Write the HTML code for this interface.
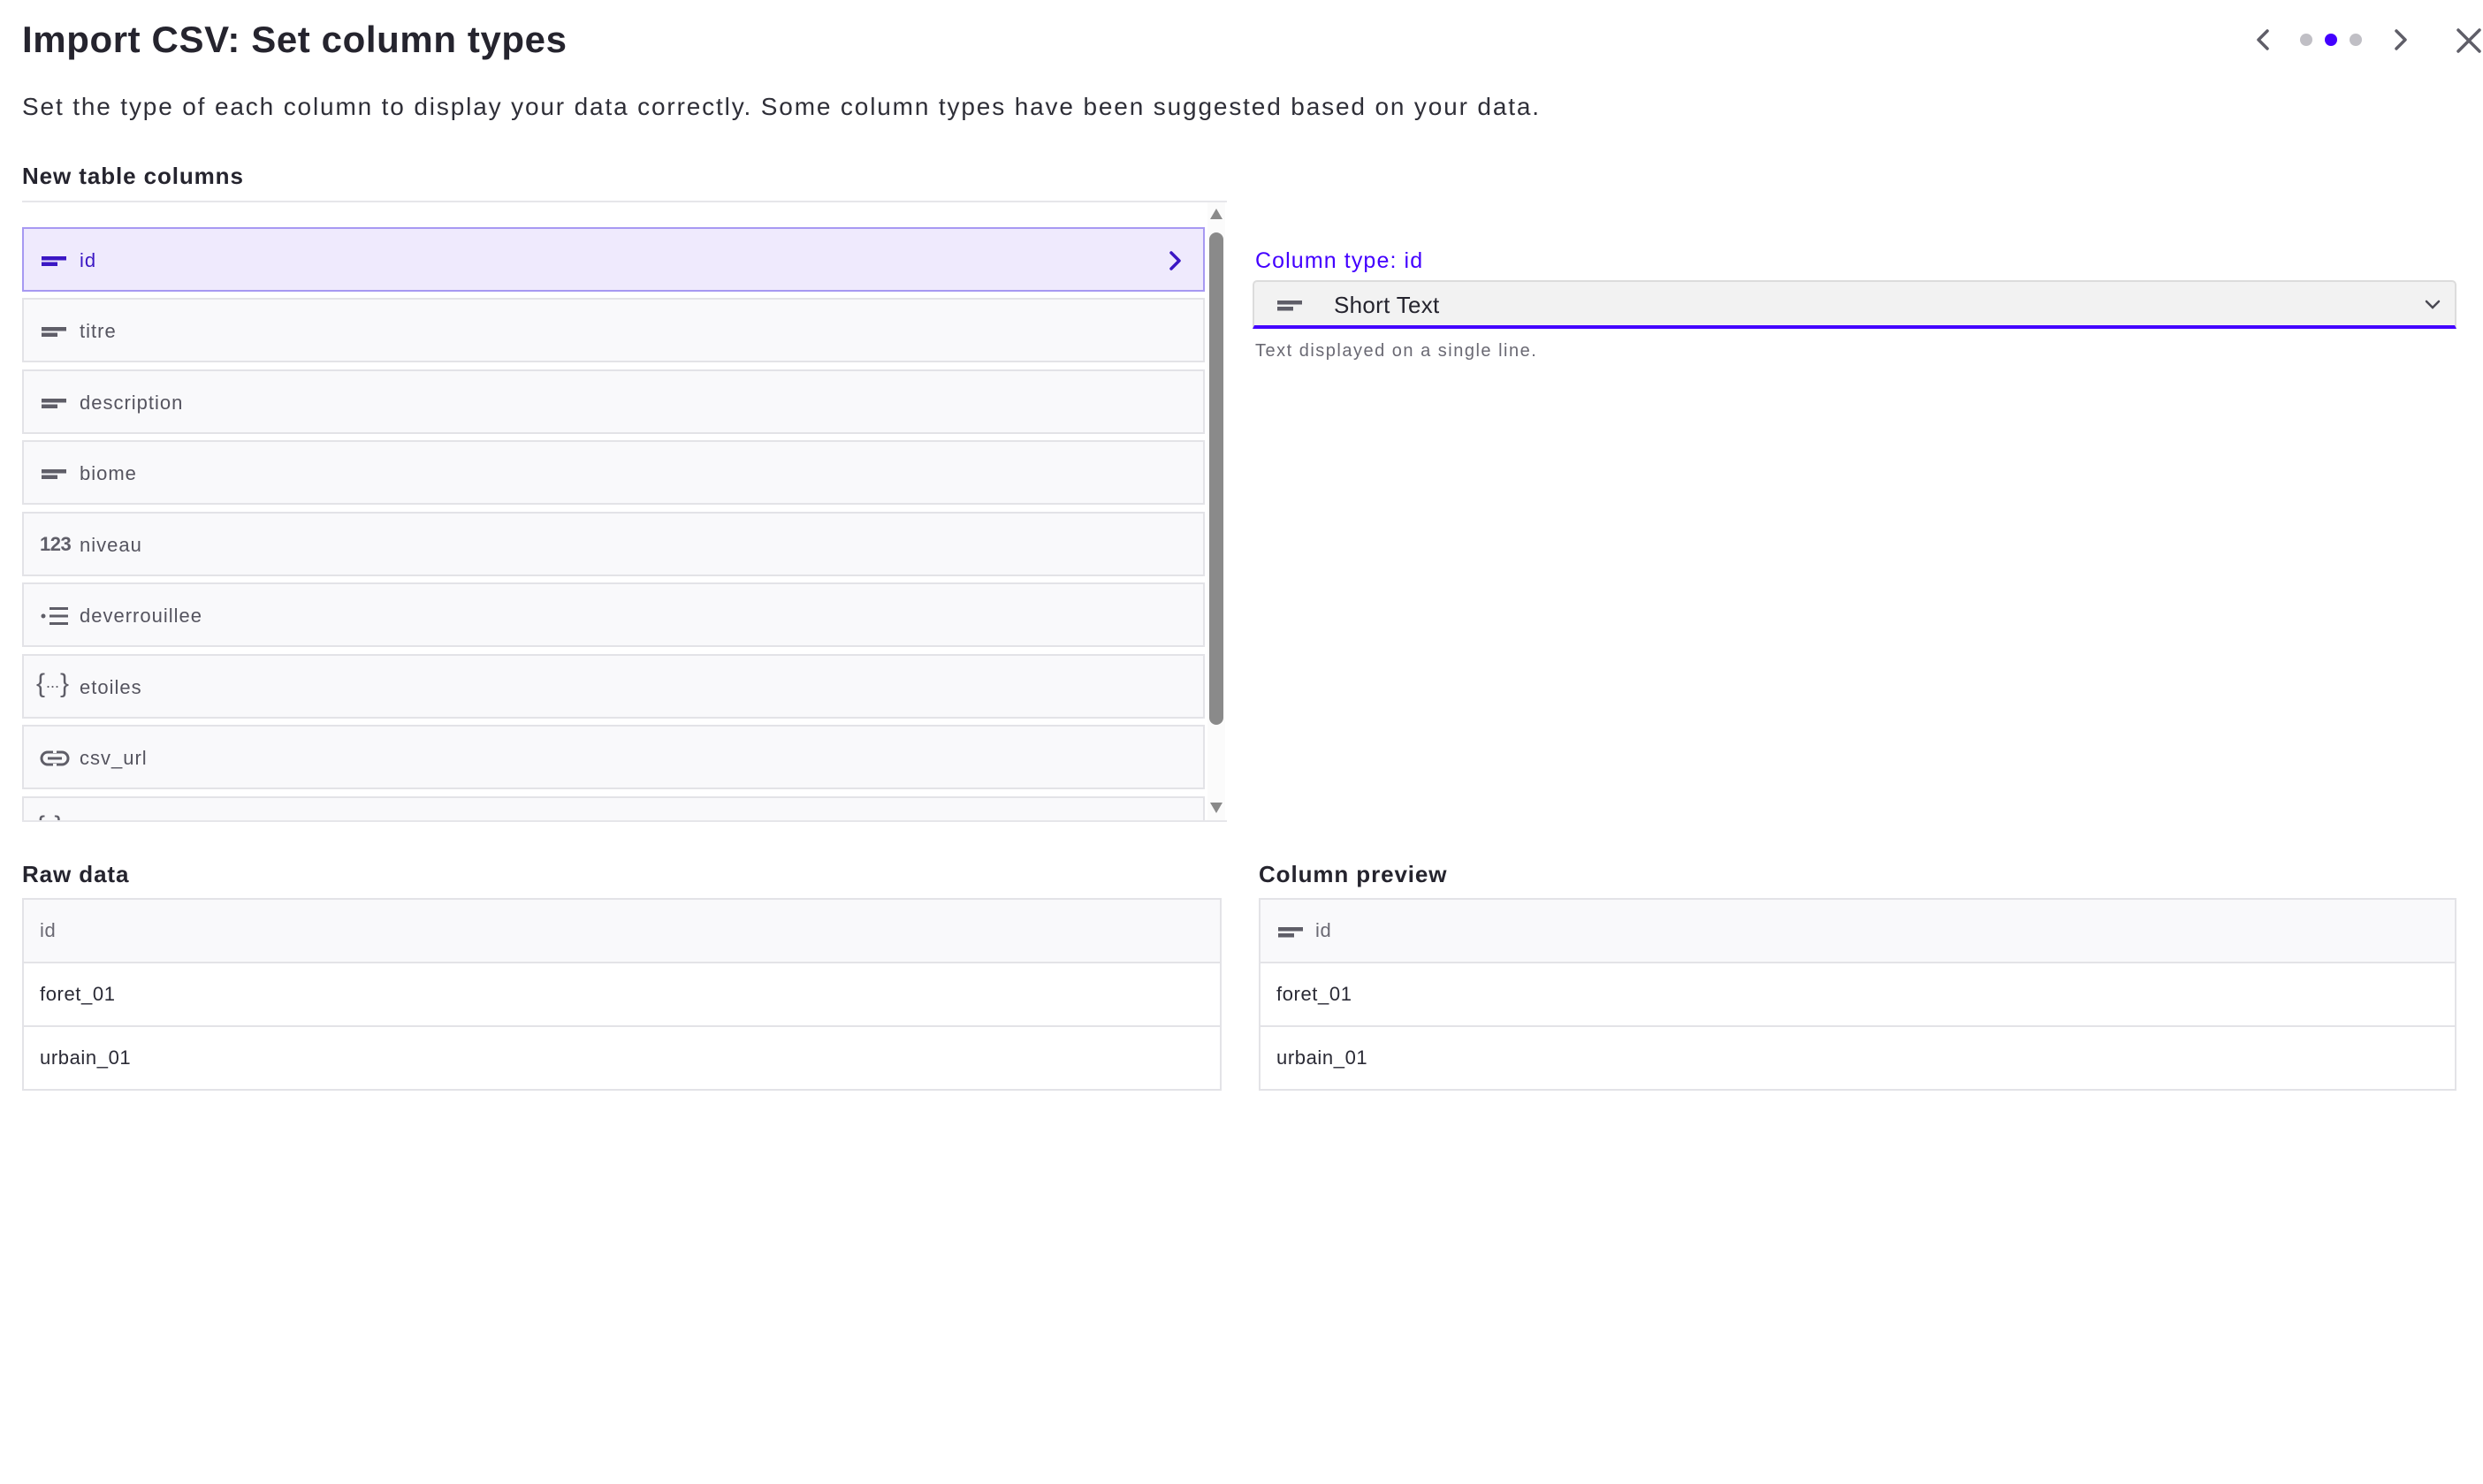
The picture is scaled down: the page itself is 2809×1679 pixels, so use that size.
<!DOCTYPE html>
<html><head><meta charset="utf-8"><style>
*{margin:0;padding:0;box-sizing:border-box}
body{width:2809px;height:1679px;background:#fff;font-family:"Liberation Sans",sans-serif;position:relative;overflow:hidden;color:#2a2a35}
.a{position:absolute}
.title{left:25px;top:21px;font-size:42px;font-weight:bold;color:#25242e;letter-spacing:0.6px}
.sub{left:25px;top:105px;font-size:28px;color:#2f2f38;letter-spacing:1.85px}
.h{font-size:26px;font-weight:bold;color:#25242e;letter-spacing:0.9px}
.row{position:absolute;left:25px;width:1338px;height:73px;background:#f9f9fb;border:2px solid #e3e3e7;font-size:22px;color:#55545f;letter-spacing:1px}
.row .ic{position:absolute;left:18px;top:22px;width:34px;height:28px}
.row .t{position:absolute;left:63px;top:23px}
.sel{background:#efeafd;border-color:#a799f2;color:#3b17c4}
table{position:absolute;border-collapse:collapse;font-size:22px;color:#2a2a35;letter-spacing:0.6px}
td{border:2px solid #e3e3e7;height:72px;padding-left:18px}
tr.hd td{background:#f9f9fb;color:#6a6973}
</style></head><body>
<div class="a title">Import CSV: Set column types</div>
<div class="a sub">Set the type of each column to display your data correctly. Some column types have been suggested based on your data.</div>
<div class="a h" style="left:25px;top:184px">New table columns</div>
<div class="a" style="left:25px;top:227px;width:1363px;height:2px;background:#e6e6ea"></div>

<svg class="a" style="left:2540px;top:25px" width="269" height="45" viewBox="0 0 269 45">
<path d="M25 10 L15 20 L25 30" fill="none" stroke="#5f5e68" stroke-width="3.5" stroke-linecap="round" stroke-linejoin="round"/>
<circle cx="69" cy="20" r="7" fill="#c0bfc5"/><circle cx="97" cy="20" r="7" fill="#4300ff"/><circle cx="125" cy="20" r="7" fill="#c0bfc5"/>
<path d="M171 10 L181 20 L171 30" fill="none" stroke="#5f5e68" stroke-width="3.5" stroke-linecap="round" stroke-linejoin="round"/>
<path d="M241 9 L265 33 M265 9 L241 33" fill="none" stroke="#5f5e68" stroke-width="3.5" stroke-linecap="round"/>
</svg>

<div style="position:absolute;left:0;top:229px;width:1395px;height:700px;overflow:hidden">
<div class="row sel" style="top:28px"><svg class="ic" viewBox="0 0 34 28"><rect x="2" y="9" width="28" height="4.5" fill="#3b17c4"/><rect x="2" y="15.5" width="18" height="4.5" fill="#3b17c4"/></svg><span class="t">id</span>
<svg style="position:absolute;left:1290px;top:22px" width="24" height="28"><path d="M8 5 L17 14 L8 23" fill="none" stroke="#3b17c4" stroke-width="3.5" stroke-linecap="round" stroke-linejoin="round"/></svg></div>
<div class="row" style="top:108px"><svg class="ic" viewBox="0 0 34 28"><rect x="2" y="9" width="28" height="4.5" fill="#5f5e68"/><rect x="2" y="15.5" width="18" height="4.5" fill="#5f5e68"/></svg><span class="t">titre</span></div>
<div class="row" style="top:189px"><svg class="ic" viewBox="0 0 34 28"><rect x="2" y="9" width="28" height="4.5" fill="#5f5e68"/><rect x="2" y="15.5" width="18" height="4.5" fill="#5f5e68"/></svg><span class="t">description</span></div>
<div class="row" style="top:269px"><svg class="ic" viewBox="0 0 34 28"><rect x="2" y="9" width="28" height="4.5" fill="#5f5e68"/><rect x="2" y="15.5" width="18" height="4.5" fill="#5f5e68"/></svg><span class="t">biome</span></div>
<div class="row" style="top:350px"><span style="position:absolute;left:18px;top:22px;font-weight:bold;color:#5f5e68;font-size:22px;letter-spacing:-0.5px">123</span><span class="t">niveau</span></div>
<div class="row" style="top:430px"><svg class="ic" viewBox="0 0 34 28"><circle cx="4" cy="14" r="2.5" fill="#5f5e68"/><rect x="11" y="4" width="21" height="3" fill="#5f5e68"/><rect x="11" y="12.5" width="21" height="3" fill="#5f5e68"/><rect x="11" y="21" width="21" height="3" fill="#5f5e68"/></svg><span class="t">deverrouillee</span></div>
<div class="row" style="top:511px"><span style="position:absolute;left:14px;top:15px;color:#5f5e68;font-size:30px">{</span><span style="position:absolute;left:25px;top:20px;color:#5f5e68;font-size:18px;letter-spacing:0">...</span><span style="position:absolute;left:41px;top:15px;color:#5f5e68;font-size:30px">}</span><span class="t">etoiles</span></div>
<div class="row" style="top:591px"><svg class="ic" viewBox="0 0 34 28"><rect x="2" y="7" width="30" height="14" rx="7" fill="none" stroke="#5f5e68" stroke-width="3"/><rect x="9" y="12.5" width="16" height="3" fill="#5f5e68"/><rect x="15" y="4" width="4" height="4" fill="#f9f9fb"/><rect x="15" y="20" width="4" height="4" fill="#f9f9fb"/></svg><span class="t">csv_url</span></div>
<div class="row" style="top:672px"><span style="position:absolute;left:14px;top:15px;color:#5f5e68;font-size:30px">{ }</span></div>
<div style="position:absolute;left:1366px;top:0;width:20px;height:700px;background:#fbfbfb"></div>
<svg style="position:absolute;left:1368px;top:6px" width="16" height="14"><path d="M8 1 L15 13 L1 13 Z" fill="#8a8a8a"/></svg>
<div style="position:absolute;left:1368px;top:34px;width:16px;height:557px;background:#8a8a8a;border-radius:8px"></div>
<svg style="position:absolute;left:1368px;top:678px" width="16" height="14"><path d="M1 1 L15 1 L8 13 Z" fill="#8a8a8a"/></svg>
</div>
<div class="a" style="left:25px;top:928px;width:1363px;height:2px;background:#e6e6ea"></div>

<div class="a" style="left:1420px;top:281px;font-size:25px;color:#4300ff;letter-spacing:1.1px">Column type: id</div>
<div class="a" style="left:1417px;top:317px;width:1362px;height:55px;background:#f2f2f2;border:2px solid #dcdcdc;border-bottom:4px solid #4300ff;border-radius:5px 5px 0 0">
<svg style="position:absolute;left:24px;top:14px" width="34" height="24"><rect x="2" y="7" width="28" height="4.5" fill="#5f5e68"/><rect x="2" y="14" width="18" height="4.5" fill="#5f5e68"/></svg>
<span style="position:absolute;left:90px;top:11px;font-size:26px;color:#25242e;letter-spacing:0.3px">Short Text</span>
<svg style="position:absolute;left:1322px;top:16px" width="22" height="20"><path d="M4 6 L11 13 L18 6" fill="none" stroke="#4a4953" stroke-width="2.5" stroke-linecap="round"/></svg>
</div>
<div class="a" style="left:1420px;top:386px;font-size:20px;color:#6a6973;letter-spacing:1.5px">Text displayed on a single line.</div>

<div class="a h" style="left:25px;top:974px">Raw data</div>
<table style="left:25px;top:1016px;width:1357px">
<tr class="hd"><td>id</td></tr><tr><td>foret_01</td></tr><tr><td>urbain_01</td></tr></table>
<div class="a h" style="left:1424px;top:974px">Column preview</div>
<table style="left:1424px;top:1016px;width:1355px">
<tr class="hd"><td><svg width="34" height="20" style="vertical-align:middle;margin-right:10px"><rect x="2" y="5" width="28" height="4.5" fill="#5f5e68"/><rect x="2" y="12" width="18" height="4.5" fill="#5f5e68"/></svg>id</td></tr><tr><td>foret_01</td></tr><tr><td>urbain_01</td></tr></table>
</body></html>
